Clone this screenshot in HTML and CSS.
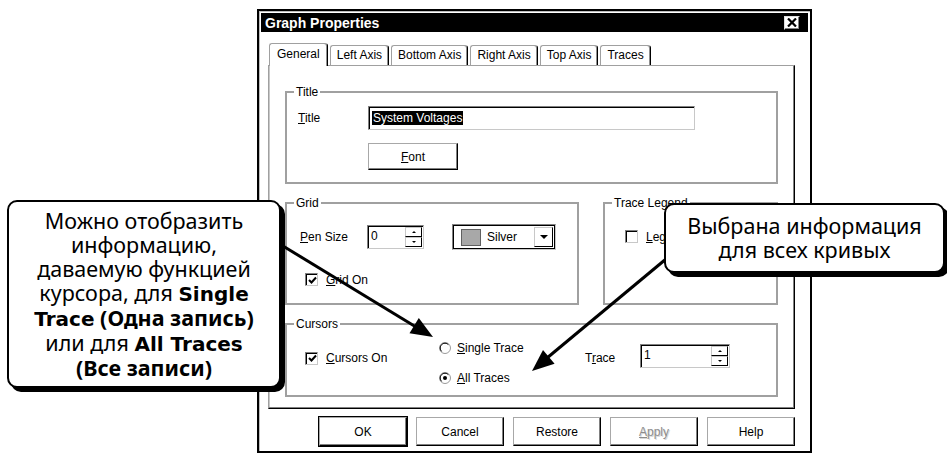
FILE: index.html
```html
<!DOCTYPE html>
<html lang="ru">
<head>
    <meta charset="UTF-8">
    <meta name="viewport" content="width=device-width, initial-scale=1.0">
    <title>Graph Properties</title>
    <link rel="stylesheet" href="styles.css">
</head>
<body>
    <div class="scene">
        <div class="dialog">
            <div class="titlebar">
                <span class="caption">Graph Properties</span>
                <span class="close">
                    <svg width="10" height="9" viewBox="0 0 10 9"><path d="M1 0.5 L9 8.5 M9 0.5 L1 8.5" stroke="#000" stroke-width="2.2"/></svg>
                </span>
            </div>

            <div class="tabs">
                <div class="tab active">General</div>
                <div class="tab">Left Axis</div>
                <div class="tab">Bottom Axis</div>
                <div class="tab">Right Axis</div>
                <div class="tab">Top Axis</div>
                <div class="tab">Traces</div>
            </div>

            <div class="panel">
                <fieldset class="group">
                    <legend>Title</legend>
                    <div class="title-grid">
                        <span class="lbl"><u>T</u>itle</span>
                        <div class="edit title-edit"><span class="sel">System Voltages</span></div>
                        <span></span>
                        <div class="btn font-btn"><u>F</u>ont</div>
                    </div>
                </fieldset>

                <div class="mid">
                    <fieldset class="group grid-group">
                        <legend>Grid</legend>
                        <div class="grid-inner">
                            <div class="pen-row">
                                <span class="lbl pen-lbl"><u>P</u>en Size</span>
                                <div class="edit spin pen-spin">
                                    <span class="val">0</span>
                                    <span class="spin-btns"><span class="up"></span><span class="dn"></span></span>
                                </div>
                                <div class="edit combo">
                                    <span class="swatch"></span>
                                    <span class="cval">Silver</span>
                                    <span class="drop"></span>
                                </div>
                            </div>
                            <div class="check-row grid-on">
                                <span class="cb"><svg width="9" height="9" viewBox="0 0 9 9"><path d="M1 4 L3.5 6.5 L8 1.5" fill="none" stroke="#000" stroke-width="2"/></svg></span>
                                <span><u>G</u>rid On</span>
                            </div>
                        </div>
                    </fieldset>

                    <fieldset class="group legend-group">
                        <legend>Trace Legend</legend>
                        <div class="legend-inner">
                            <div class="check-row">
                                <span class="cb"></span>
                                <span><u>L</u>egend On</span>
                            </div>
                        </div>
                    </fieldset>
                </div>

                <fieldset class="group">
                    <legend>Cursors</legend>
                    <div class="cursors-inner">
                        <div class="check-row cursors-on">
                            <span class="cb"><svg width="9" height="9" viewBox="0 0 9 9"><path d="M1 4 L3.5 6.5 L8 1.5" fill="none" stroke="#000" stroke-width="2"/></svg></span>
                            <span><u>C</u>ursors On</span>
                        </div>
                        <div class="radios">
                            <div class="radio-row">
                                <svg class="rb" width="12" height="12" viewBox="0 0 12 12"><circle cx="6" cy="6" r="5.5" fill="#fff" stroke="#9a9a9a"/><path d="M2.6 9.4 A4.6 4.6 0 0 1 9.4 2.6" fill="none" stroke="#000"/></svg>
                                <span><u>S</u>ingle Trace</span>
                            </div>
                            <div class="radio-row">
                                <svg class="rb" width="12" height="12" viewBox="0 0 12 12"><circle cx="6" cy="6" r="5.5" fill="#fff" stroke="#9a9a9a"/><path d="M2.6 9.4 A4.6 4.6 0 0 1 9.4 2.6" fill="none" stroke="#000"/><circle cx="6" cy="6" r="2" fill="#000"/></svg>
                                <span><u>A</u>ll Traces</span>
                            </div>
                        </div>
                        <span class="lbl trace-lbl">T<u>r</u>ace</span>
                        <div class="edit spin trace-spin">
                            <span class="val">1</span>
                            <span class="spin-btns"><span class="up"></span><span class="dn"></span></span>
                        </div>
                    </div>
                </fieldset>
            </div>

            <div class="buttons">
                <div class="btn default">OK</div>
                <div class="btn">Cancel</div>
                <div class="btn">Restore</div>
                <div class="btn disabled"><u>A</u>pply</div>
                <div class="btn">Help</div>
            </div>
        </div>

        <svg class="arrows" width="947" height="454" viewBox="0 0 947 454">
            <!-- к Single Trace -->
            <line x1="283" y1="246" x2="416" y2="327" stroke="#000" stroke-width="3"/>
            <polygon points="433,337 409.5,333.3 418.8,317.9" fill="#000"/>
            <!-- к All Traces -->
            <line x1="666" y1="259" x2="547" y2="358" stroke="#000" stroke-width="3"/>
            <polygon points="532,371 543,349.9 554.6,363.7" fill="#000"/>
        </svg>

        <div class="callout callout-left">
            <p>Можно отобразить<br>информацию,<br>даваемую функцией<br>курсора, для <b class="heavy">Single</b><br><b class="heavy">Trace</b> <b>(Одна запись)</b><br>или для <b class="heavy">All Traces</b><br><b>(Все записи)</b></p>
        </div>
        <div class="callout callout-right">
            <p>Выбрана информация<br>для всех кривых</p>
        </div>
    </div>
</body>
</html>
```

FILE: styles.css
```css
body {
    margin: 0;
    background: #fff;
    font-family: "Liberation Sans", Arial, sans-serif;
    font-size: 12px;
    color: #000;
}
.scene {
    position: relative;
    width: 947px;
    height: 454px;
    overflow: hidden;
}

/* окно */
.dialog {
    margin: 9px 0 0 257px;
    width: 555px;
    height: 444px;
    box-sizing: border-box;
    border: 2px solid #000;
    padding: 2px 11px 0 9px;
    box-shadow: inset 1px 1px #bdbdbd;
}
.titlebar {
    height: 19px;
    margin: 0 -9px 0 -7px;
    background: #000;
    color: #fff;
    display: flex;
    align-items: center;
    justify-content: space-between;
    padding: 0 8px 0 4px;
}
.caption {
    font-weight: bold;
    font-size: 14px;
}
.close {
    width: 16px;
    height: 14px;
    box-sizing: border-box;
    background: #fff;
    border: 1px solid;
    border-color: #dfdfdf #000 #000 #dfdfdf;
    box-shadow: inset -1px -1px #808080;
    display: flex;
    align-items: center;
    justify-content: center;
}

/* вкладки */
.tabs {
    display: flex;
    align-items: flex-end;
    margin-top: 11px;
    padding-left: 1px;
    height: 22px;
    position: relative;
    z-index: 1;
}
.tab {
    height: 20px;
    box-sizing: border-box;
    padding: 0 6px;
    line-height: 19px;
    border: 1px solid #a0a0a0;
    border-bottom: none;
    border-right-color: #000;
    border-radius: 3px 3px 0 0;
    margin-right: 2px;
    background: #fff;
    box-shadow: inset -1px 0 #909090;
}
.tab.active {
    height: 23px;
    margin-bottom: -1px;
    padding: 0 7px;
    line-height: 21px;
}
.panel {
    width: 527px;
    box-sizing: border-box;
    border: 1px solid;
    border-color: #a0a0a0 #000 #000 #a0a0a0;
    box-shadow: inset -1px -1px #808080, inset 1px 0 #c8c8c8;
    padding: 19px 16px 11px 16px;
    display: flex;
    flex-direction: column;
    gap: 12px;
}

/* группы */
.group {
    margin: 0;
    padding: 0;
    min-width: 0;
    border: 2px solid #a0a0a0;
}
.group legend {
    padding: 0 2px;
    margin-left: 7px;
    line-height: 14px;
}
.lbl {
    white-space: nowrap;
}
.title-grid {
    display: grid;
    grid-template-columns: 70px 327px;
    row-gap: 13px;
    align-items: center;
    padding: 7px 0 12px 11px;
}
.mid {
    display: flex;
    gap: 24px;
}
.grid-group {
    width: 294px;
    box-sizing: border-box;
}
.legend-group {
    flex: 1;
}
.grid-inner {
    padding: 14px 0 16px 13px;
}
.pen-row {
    display: flex;
    align-items: center;
}
.pen-lbl {
    width: 67px;
}
.legend-inner {
    padding: 19px 0 0 20px;
}
.check-row {
    display: flex;
    align-items: center;
    gap: 8px;
    height: 15px;
}
.grid-on {
    margin: 22px 0 0 5px;
}
.cursors-inner {
    display: flex;
    align-items: center;
    padding: 9px 0 10px 18px;
}
.cursors-on {
    width: 134px;
    margin-bottom: 9px;
}
.radios {
    width: 146px;
    display: flex;
    flex-direction: column;
    gap: 15px;
}
.radio-row {
    display: flex;
    align-items: center;
    gap: 6px;
    height: 15px;
}
.trace-lbl {
    width: 55px;
    margin-bottom: 9px;
}

/* элементы управления */
.edit {
    box-sizing: border-box;
    background: #fff;
    border: 1px solid;
    border-color: #808080 #c8c8c8 #c8c8c8 #808080;
    box-shadow: inset 1px 1px #000;
}
.title-edit {
    height: 24px;
    padding: 3px 0 0 3px;
    line-height: 16px;
}
.sel {
    background: #000;
    color: #fff;
    padding: 0 1px;
}
.spin {
    height: 24px;
    display: flex;
}
.pen-spin {
    width: 57px;
}
.trace-spin {
    width: 90px;
    margin-bottom: 13px;
}
.val {
    flex: 1;
    padding: 2px 0 0 3px;
    line-height: 16px;
}
.spin-btns {
    width: 17px;
    display: flex;
    flex-direction: column;
    margin: 1px 1px 1px 0;
}
.up, .dn {
    flex: 1;
    border: 1px solid;
    border-color: #c8c8c8 #000 #000 #c8c8c8;
    display: flex;
    align-items: center;
    justify-content: center;
}
.up::after {
    content: "";
    border-left: 2px solid transparent;
    border-right: 2px solid transparent;
    border-bottom: 2px solid #000;
}
.dn::after {
    content: "";
    border-left: 2px solid transparent;
    border-right: 2px solid transparent;
    border-top: 2px solid #000;
}
.combo {
    width: 104px;
    height: 26px;
    margin-left: 28px;
    display: flex;
    align-items: center;
    box-shadow: inset 1px 1px #000, inset -1px -1px #000;
}
.swatch {
    width: 18px;
    height: 15px;
    background: #a8a8a8;
    border: 1px solid #606060;
    margin-left: 8px;
}
.cval {
    flex: 1;
    padding-left: 6px;
}
.drop {
    width: 19px;
    align-self: stretch;
    margin: 2px 2px 2px 0;
    box-sizing: border-box;
    border: 1px solid;
    border-color: #c8c8c8 #000 #000 #c8c8c8;
    display: flex;
    align-items: center;
    justify-content: center;
}
.drop::after {
    content: "";
    border-left: 4px solid transparent;
    border-right: 4px solid transparent;
    border-top: 4px solid #000;
}
.cb {
    width: 13px;
    height: 13px;
    box-sizing: border-box;
    border: 1px solid;
    border-color: #808080 #c8c8c8 #c8c8c8 #808080;
    box-shadow: inset 1px 1px #000;
    display: inline-flex;
    align-items: center;
    justify-content: center;
    padding: 1px 0 0 1px;
}
.cb svg {
    display: block;
}
.rb {
    display: block;
}

/* кнопки */
.btn {
    width: 88px;
    height: 29px;
    box-sizing: border-box;
    border: 1px solid;
    border-color: #a8a8a8 #000 #000 #a8a8a8;
    box-shadow: inset -1px -1px #808080;
    display: flex;
    align-items: center;
    justify-content: center;
    background: #fff;
}
.font-btn {
    width: 90px;
    height: 27px;
}
.btn.default {
    box-shadow: inset -1px -1px #808080, 0 0 0 1px #000;
}
.btn.disabled {
    color: #8c8c8c;
    text-shadow: 1px 1px 0 #d8d8d8;
}
.buttons {
    width: 527px;
    display: flex;
    justify-content: flex-end;
    gap: 9px;
    margin-top: 8px;
}

/* стрелки и выноски */
.arrows {
    position: absolute;
    left: 0;
    top: 0;
    pointer-events: none;
}
.callout {
    position: absolute;
    box-sizing: border-box;
    background: #fff;
    border: 2px solid #000;
    border-radius: 10px;
    box-shadow: 4px 4px 0 #000;
    font-family: "Noto Sans", "DejaVu Sans", sans-serif;
    font-size: 21.5px;
    line-height: 24px;
    text-align: center;
    display: flex;
    align-items: center;
    justify-content: center;
}
.callout p {
    margin: 0;
}
.callout b {
    font-weight: 700;
}
.callout .heavy {
    font-family: "DejaVu Sans", sans-serif;
    font-weight: bold;
    font-size: 20px;
}
.callout-left {
    left: 7px;
    top: 200px;
    width: 274px;
    height: 188px;
}
.callout-right {
    left: 664px;
    top: 203px;
    width: 281px;
    height: 70px;
}
```
